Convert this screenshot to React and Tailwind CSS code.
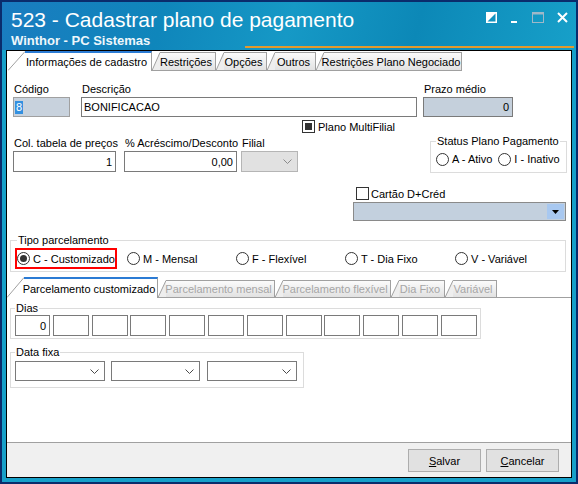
import React from 'react';

function Chevron({ color = '#4a4a4a' }) {
    return (
        <svg width="9" height="5" viewBox="0 0 9 5" className="block">
            <polyline points="0.5,0.5 4.5,4.5 8.5,0.5" fill="none" stroke={color} strokeWidth="1" />
        </svg>
    );
}

function Radio({ checked, label, className = '' }) {
    return (
        <div className={`flex items-center gap-[3px] ${className}`}>
            <span className="w-[13px] h-[13px] shrink-0 rounded-full border border-[#333] bg-white flex items-center justify-center">
                {checked && <span className="w-[7px] h-[7px] rounded-full bg-[#333]"></span>}
            </span>
            <span className="whitespace-nowrap">{label}</span>
        </div>
    );
}

function Check({ filled }) {
    return (
        <span className="w-[13px] h-[13px] shrink-0 border border-[#333] bg-white flex items-center justify-center">
            {filled && <span className="w-[7px] h-[7px] bg-[#333]"></span>}
        </span>
    );
}

function Label({ children }) {
    return <div className="h-[15px] pl-[1px] whitespace-nowrap">{children}</div>;
}

function Tab({ label, active, disabled, slant, h, w }) {
    const fill = active ? '#ffffff' : '#eeeeee';
    return (
        <div className="flex shrink-0">
            <svg width={slant} height={h} className="block shrink-0">
                <polygon points={`0,${h} ${slant},0 ${slant},${h}`} fill={fill} />
                <line x1="0" y1={h - 0.5} x2={slant} y2="0.5" stroke="#a0a0a0" />
                {!active && <line x1="0" y1={h - 0.5} x2={slant} y2={h - 0.5} stroke="#a0a0a0" />}
            </svg>
            <div
                className={`${w} flex items-center justify-center pr-[3px] whitespace-nowrap border-r border-[#a0a0a0] ${active
                    ? 'bg-white border-t-2 border-t-[#2b7bd4]'
                    : 'bg-gradient-to-b from-[#fbfbfb] to-[#e2e2e2] border-t border-t-[#a0a0a0] border-b border-b-[#a0a0a0]'
                    } ${disabled ? 'text-[#a6a6a6]' : 'text-black'}`}
            >
                {label}
            </div>
        </div>
    );
}

function Select({ w }) {
    return (
        <div className={`${w} h-[20px] border border-[#7a7a7a] bg-white flex items-center justify-end pr-[5px]`}>
            <Chevron />
        </div>
    );
}

function TitleBar() {
    return (
        <div className="relative h-[48px] shrink-0 overflow-hidden bg-[linear-gradient(105deg,#1a7cc0_0%,#0f86bb_28%,#1699c6_50%,#0c88b7_72%,#17a0c9_100%)] text-white">
            <div className="pl-[9px] pt-[6px] text-[21px] leading-[24px]">523 - Cadastrar plano de pagamento</div>
            <div className="pl-[9px] mt-[1px] text-[13px] leading-[15px] font-bold text-[#eef7fb]">Winthor - PC Sistemas</div>
            <div className="absolute left-[243px] right-[2px] top-[44px] h-[2px] bg-[#e39a2c]"></div>
            <div className="absolute top-[10px] right-[8px] flex items-start gap-[13px]">
                <svg width="11" height="11" viewBox="0 0 11 11" className="block">
                    <rect x="0.75" y="0.75" width="9.5" height="9.5" fill="none" stroke="#fff" strokeWidth="1.5" />
                    <polygon points="1,10 10,1 1,1" fill="#fff" />
                </svg>
                <svg width="9" height="11" viewBox="0 0 9 11" className="block">
                    <rect x="1" y="9" width="6" height="2" fill="#fff" />
                </svg>
                <svg width="12" height="11" viewBox="0 0 12 11" className="block">
                    <rect x="0.5" y="0.5" width="11" height="10" fill="none" stroke="#9fb8c8" strokeWidth="1" />
                    <rect x="0.5" y="0.5" width="11" height="2" fill="#9fb8c8" />
                </svg>
                <svg width="11" height="11" viewBox="0 0 11 11" className="block">
                    <path d="M1 1 L10 10 M10 1 L1 10" stroke="#fff" strokeWidth="2" />
                </svg>
            </div>
        </div>
    );
}

export default function App() {
    const dias = ['0', '', '', '', '', '', '', '', '', '', '', ''];

    return (
        <div className="w-[578px] h-[484px] bg-[#0a2c6c] p-[2px] font-['Liberation_Sans',Arial,sans-serif] text-[11px] leading-[14px] text-black">
            <div className="w-full h-full flex flex-col bg-[#17a0c9]">
                <TitleBar />
                <div className="flex-1 flex px-[4px] pb-[4px]">
                    <div className="flex-1 flex flex-col border border-black bg-white">
                        {/* top tabs */}
                        <div className="h-[20px] flex items-end pl-[1px]">
                            <Tab label="Informações de cadastro" active slant={17} h={20} w="w-[127px]" />
                            <Tab label="Restrições" slant={8} h={19} w="w-[56px]" />
                            <Tab label="Opções" slant={8} h={19} w="w-[43px]" />
                            <Tab label="Outros" slant={8} h={19} w="w-[41px]" />
                            <Tab label="Restrições Plano Negociado" slant={8} h={19} w="w-[138px]" />
                        </div>

                        {/* codigo / descricao / prazo */}
                        <div className="flex items-end mt-[11px] ml-[6px]">
                            <div className="w-[57px]">
                                <Label>Código</Label>
                                <div className="h-[20px] border border-[#a0a0a0] bg-[#c8d2dd] flex items-center pl-[1px]">
                                    <span className="bg-[#3390e0] text-white px-[1px] leading-[13px]">8</span>
                                </div>
                            </div>
                            <div className="w-[336px] ml-[11px]">
                                <Label>Descrição</Label>
                                <div className="h-[20px] border border-[#7a7a7a] bg-white flex items-center pl-[2px]">BONIFICACAO</div>
                            </div>
                            <div className="w-[90px] ml-[6px]">
                                <Label>Prazo médio</Label>
                                <div className="h-[20px] border border-[#7a7a7a] bg-[#c5d0dc] flex items-center justify-end pr-[3px]">0</div>
                            </div>
                        </div>

                        <div className="flex items-center gap-[3px] mt-[3px] ml-[295px] h-[13px]">
                            <Check filled />
                            <span>Plano MultiFilial</span>
                        </div>

                        {/* col tabela / acrescimo / filial / status */}
                        <div className="flex items-start mt-[3px] ml-[6px]">
                            <div className="w-[103px]">
                                <Label>Col. tabela de preços</Label>
                                <div className="h-[21px] border border-[#7a7a7a] bg-white flex items-center justify-end pr-[3px]">1</div>
                            </div>
                            <div className="w-[113px] ml-[8px]">
                                <Label>% Acréscimo/Desconto</Label>
                                <div className="h-[21px] border border-[#7a7a7a] bg-white flex items-center justify-end pr-[3px]">0,00</div>
                            </div>
                            <div className="w-[57px] ml-[4px]">
                                <Label>Filial</Label>
                                <div className="h-[21px] border border-[#b5b5b5] bg-[#e1e1e1] flex items-center justify-end pr-[5px]">
                                    <Chevron color="#8a8a8a" />
                                </div>
                            </div>
                            <fieldset className="w-[137px] h-[39px] ml-[132px] -mt-[2px] border border-[#dcdcdc] pl-[5px]">
                                <legend className="px-[1px] leading-[14px] whitespace-nowrap">Status Plano Pagamento</legend>
                                <div className="flex items-center mt-[4px]">
                                    <Radio label="A - Ativo" />
                                    <Radio label="I - Inativo" className="ml-[6px]" />
                                </div>
                            </fieldset>
                        </div>

                        {/* cartao */}
                        <div className="flex items-center gap-[2px] mt-[14px] ml-[349px] h-[13px]">
                            <Check />
                            <span>Cartão D+Créd</span>
                        </div>
                        <div className="w-[213px] h-[19px] mt-[2px] ml-[346px] border border-[#8a8a8a] bg-[#c3d0de] flex items-center justify-end pr-[1px]">
                            <div className="w-[17px] h-[15px] bg-[#a8c8f0] flex items-center justify-center">
                                <svg width="7" height="4" viewBox="0 0 7 4" className="block">
                                    <polygon points="0,0 7,0 3.5,4" fill="#000" />
                                </svg>
                            </div>
                        </div>

                        {/* tipo parcelamento */}
                        <fieldset className="w-[556px] h-[39px] mt-[12px] ml-[3px] border border-[#dcdcdc] pl-[6px]">
                            <legend className="px-[1px] leading-[14px]">Tipo parcelamento</legend>
                            <div className="flex items-center mt-[1px]">
                                <div className="w-[102px] h-[21px] -ml-[2px] border-2 border-[#ff0000] flex items-center">
                                    <Radio checked label="C - Customizado" />
                                </div>
                                <Radio label="M - Mensal" className="w-[109px] ml-[10px]" />
                                <Radio label="F - Flexível" className="w-[109px]" />
                                <Radio label="T - Dia Fixo" className="w-[110px]" />
                                <Radio label="V - Variável" />
                            </div>
                        </fieldset>

                        {/* inner tabs */}
                        <div className="h-[21px] mt-[5px] flex items-end">
                            <Tab label="Parcelamento customizado" active slant={17} h={21} w="w-[134px]" />
                            <Tab label="Parcelamento mensal" disabled slant={8} h={18} w="w-[109px]" />
                            <Tab label="Parcelamento flexível" disabled slant={8} h={18} w="w-[108px]" />
                            <Tab label="Dia Fixo" disabled slant={8} h={18} w="w-[46px]" />
                            <Tab label="Variável" disabled slant={8} h={18} w="w-[44px]" />
                            <div className="flex-1 h-[1px] bg-[#a0a0a0]"></div>
                        </div>

                        {/* dias */}
                        <fieldset className="w-[471px] h-[38px] mt-[3px] ml-[3px] border border-[#dcdcdc] pl-[4px]">
                            <legend className="px-[1px] leading-[14px]">Dias</legend>
                            <div className="flex gap-[2.8px]">
                                {dias.map((d, i) => (
                                    <div
                                        key={i}
                                        className={`${i === 0 ? 'w-[35px]' : 'w-[36px]'} h-[21px] border border-[#7a7a7a] bg-white flex items-center justify-end pr-[3px]`}
                                    >
                                        {d}
                                    </div>
                                ))}
                            </div>
                        </fieldset>

                        {/* data fixa */}
                        <fieldset className="w-[294px] h-[43px] mt-[6px] ml-[3px] border border-[#dcdcdc] pl-[4px]">
                            <legend className="px-[1px] leading-[14px]">Data fixa</legend>
                            <div className="flex items-center mt-[2px]">
                                <Select w="w-[90px]" />
                                <div className="ml-[6px]"><Select w="w-[89px]" /></div>
                                <div className="ml-[7px]"><Select w="w-[90px]" /></div>
                            </div>
                        </fieldset>

                        <div className="flex-1"></div>

                        {/* bottom bar */}
                        <div className="h-[35px] border-t border-[#a0a0a0] bg-[#f0f0f0] flex justify-end items-start pt-[6px] pr-[12px] gap-[5px]">
                            <button className="w-[73px] h-[23px] border border-[#adadad] bg-[#e1e1e1] flex items-center justify-center">
                                <span><span className="underline">S</span>alvar</span>
                            </button>
                            <button className="w-[73px] h-[23px] border border-[#adadad] bg-[#e1e1e1] flex items-center justify-center">
                                <span><span className="underline">C</span>ancelar</span>
                            </button>
                        </div>
                    </div>
                </div>
            </div>
        </div>
    );
}
